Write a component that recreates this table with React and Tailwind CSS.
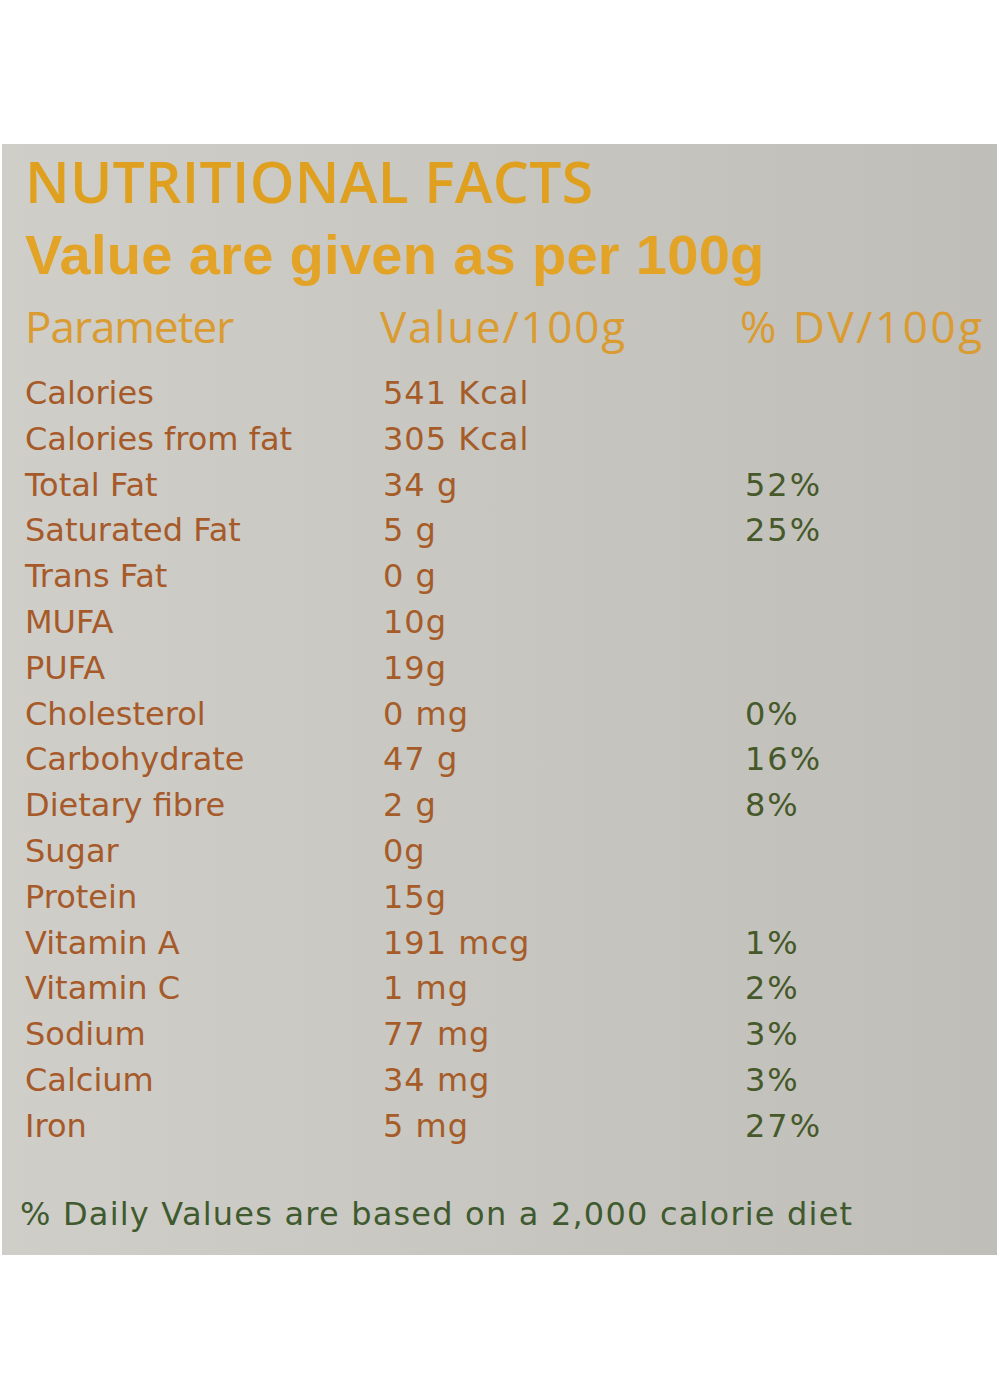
import React from "react";

const rows = [
  ["Calories", "541 Kcal", ""],
  ["Calories from fat", "305 Kcal", ""],
  ["Total Fat", "34 g", "52%"],
  ["Saturated Fat", "5 g", "25%"],
  ["Trans Fat", "0 g", ""],
  ["MUFA", "10g", ""],
  ["PUFA", "19g", ""],
  ["Cholesterol", "0 mg", "0%"],
  ["Carbohydrate", "47 g", "16%"],
  ["Dietary fibre", "2 g", "8%"],
  ["Sugar", "0g", ""],
  ["Protein", "15g", ""],
  ["Vitamin A", "191 mcg", "1%"],
  ["Vitamin C", "1 mg", "2%"],
  ["Sodium", "77 mg", "3%"],
  ["Calcium", "34 mg", "3%"],
  ["Iron", "5 mg", "27%"],
];

const App = () => {
  return (
    <div className="w-[1000px] h-[1400px] bg-white pt-[144px] font-['Open_Sans',sans-serif]">
      <div className="ml-[2px] w-[995px] h-[1111px] bg-gradient-to-r from-[#d0cec8] to-[#c0beb8] pl-[23px] pt-[6px]">
        {/* title */}
        <h1 className="text-[57px] leading-[62px] font-semibold text-[#e0a01f] tracking-[0.3px]">
          NUTRITIONAL FACTS
        </h1>
        <h2 className="mt-[11px] font-['Liberation_Sans',sans-serif] text-[56px] leading-[63px] font-bold text-[#e2a326] tracking-[0.3px]">
          Value are given as per 100g
        </h2>

        {/* header row */}
        <div className="grid grid-cols-[355px_360px_1fr] text-[44px] leading-[60px] text-[#da9b30] mt-[10px]">
          <span className="tracking-[-1px]">Parameter</span>
          <span className="tracking-[1.8px]">Value/100g</span>
          <span className="tracking-[2.6px]">% DV/100g</span>
        </div>

        {/* rows */}
        <div className="mt-[15px] font-['DejaVu_Sans',sans-serif] text-[32px] leading-[45.8px]">
          {rows.map(([name, value, dv]) => (
            <div key={name} className="grid grid-cols-[358px_362px_1fr]">
              <span className="text-[#a65a2a]">{name}</span>
              <span className="text-[#a65c28] tracking-[1px]">{value}</span>
              <span className="text-[#46592a] tracking-[2px]">{dv}</span>
            </div>
          ))}
        </div>

        {/* footer */}
        <p className="mt-[42px] -ml-[5px] font-['DejaVu_Sans',sans-serif] text-[32px] leading-[45px] text-[#3f5a2f] tracking-[1.2px]">
          % Daily Values are based on a 2,000 calorie diet
        </p>
      </div>
    </div>
  );
};

export default App;
